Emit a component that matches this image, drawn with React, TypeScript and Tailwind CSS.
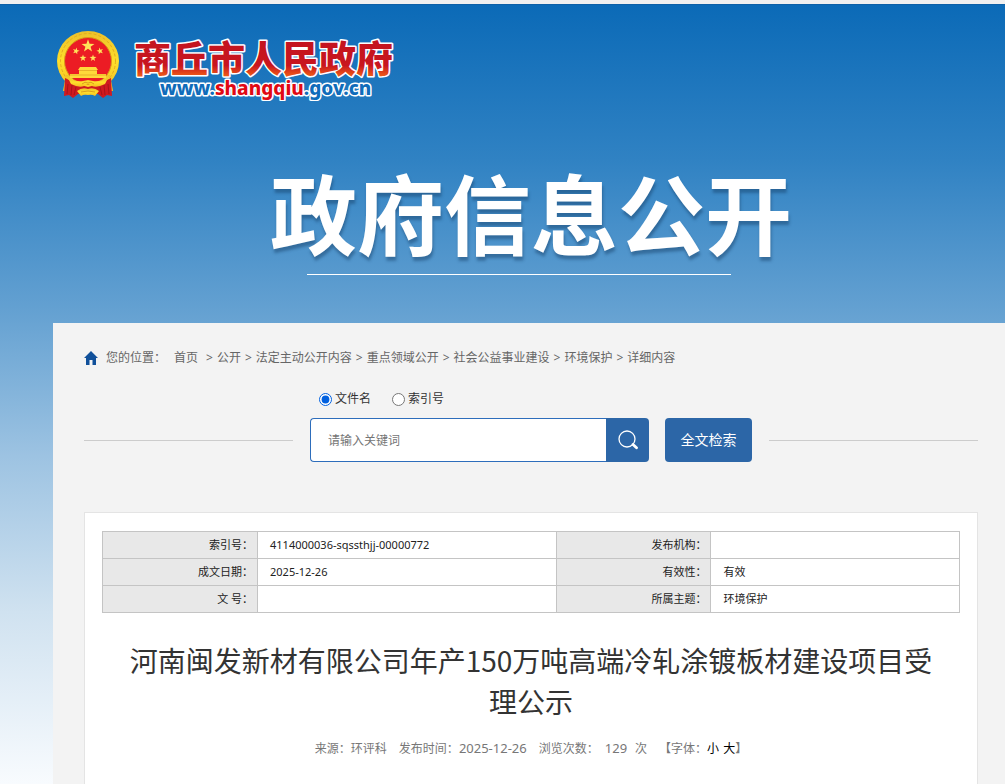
import { Fragment } from 'react'

const crumbs = ['公开', '法定主动公开内容', '重点领域公开', '社会公益事业建设', '环境保护', '详细内容']

const infoRows = [
  ['索引号：', '4114000036-sqssthjj-00000772', '发布机构：', ''],
  ['成文日期：', '2025-12-26', '有效性：', '有效'],
  ['文 号：', '', '所属主题：', '环境保护'],
]

const STAR = 'M0-10 2.3-3.2 9.5-3.1 3.8 1.2 5.9 8.1 0 4-5.9 8.1-3.8 1.2-9.5-3.1-2.3-3.2Z'

function Emblem() {
  return (
    <svg aria-hidden="true" className="shrink-0" height="68" viewBox="0 0 62 68" width="62">
      <defs>
        <linearGradient id="gold" x1="0" x2="0" y1="0" y2="1">
          <stop offset="0" stopColor="#ecc02a" />
          <stop offset="0.5" stopColor="#ffdf2b" />
          <stop offset="1" stopColor="#f5bd22" />
        </linearGradient>
      </defs>
      <ellipse cx="31" cy="30" fill="url(#gold)" rx="31" ry="30" />
      <path d="M9 44 6 60h14l11-4 11 4h14l-3-16Z" fill="url(#gold)" />
      <circle cx="31" cy="30" fill="none" r="27.5" stroke="#e3ab1f" strokeDasharray="3 2" strokeWidth="1" />
      <circle cx="31" cy="30" fill="#ec1c24" r="23.5" stroke="#d9961b" />
      <g fill="#ffe45a">
        <path d={STAR} transform="translate(31 15) scale(.68)" />
        <path d={STAR} transform="translate(19 20) rotate(15) scale(.36)" />
        <path d={STAR} transform="translate(43 20) rotate(-15) scale(.36)" />
        <path d={STAR} transform="translate(26 27) scale(.36)" />
        <path d={STAR} transform="translate(36 27) scale(.36)" />
      </g>
      <path d="M23 36h16l2 3h-1v4h9v4H13v-4h9v-4h-1Z" fill="#ffd93a" />
      <path d="M22 39.5h18M13 44h36" stroke="#e0a024" strokeWidth=".7" />
      {/* Ribbon */}
      <path d="M8 47 20 53l11 3 11-3 12-6 1 18-5-1-4 3-5-4H21l-5 4-4-3-5 1Z" fill="#cf1a20" />
      <path d="M11 47q9 4 15 3l5-1 5 1q6 1 15-3l-3 6q-8 4-13 2l-4-2-4 2q-5 2-13-2Z" fill="url(#gold)" />
      <path d="M20 60q5-4 11-2 6-2 11 2l-4 5q-3-2-7-1-4-1-7 1Z" fill="url(#gold)" />
      <path d="m11 53-1 10m5-9-1 10m5-8-2 8m34-11 1 10m-5-9 1 10m-5-8 2 8" stroke="#9e1118" strokeWidth=".8" />
      <path d="M25 53q3-3 6-1 3-2 6 1M24 61q7-2 14 0" fill="none" stroke="#d38f1b" strokeWidth=".8" />
    </svg>
  )
}

function SiteName() {
  return (
    <svg className="shrink-0" height="70" viewBox="0 0 266 70" width="266">
      <defs>
        <linearGradient gradientUnits="userSpaceOnUse" id="nameRed" x1="0" x2="0" y1="10" y2="45">
          <stop offset="0" stopColor="#c4141f" />
          <stop offset="0.7" stopColor="#c8161f" />
          <stop offset="1" stopColor="#ee5a17" />
        </linearGradient>
      </defs>
      <g paintOrder="stroke" stroke="#fff" strokeLinejoin="round" strokeWidth="3">
        <text
          className="font-['Noto_Sans_CJK_SC',sans-serif] text-[37px] font-black"
          fill="url(#nameRed)"
          x="1"
          y="42"
        >
          商丘市人民政府
        </text>
        <text className="font-['Noto_Sans',sans-serif] text-[19px] font-extrabold" fill="#0f6cba" x="27" y="64">
          www.<tspan fill="#e00914">shangqiu</tspan>.gov.cn
        </text>
      </g>
    </svg>
  )
}

function Breadcrumb() {
  return (
    <nav className="flex items-center text-xs leading-4 text-[#666]">
      <svg aria-hidden="true" className="mr-2" height="14" viewBox="0 0 14 14" width="14">
        <path d="M7 0 0 7h2v7h3.5V9h3v5H12V7h2Z" fill="#10509a" />
      </svg>
      <span>您的位置：</span>
      <a className="mr-1 ml-2" href="#">
        首页
      </a>
      {crumbs.map((crumb) => (
        <Fragment key={crumb}>
          <span className="px-1">&gt;</span>
          <a href="#">{crumb}</a>
        </Fragment>
      ))}
    </nav>
  )
}

function SearchArea() {
  return (
    <div className="mt-6 flex items-end gap-[17px]">
      <div className="mb-[21px] h-px flex-1 bg-[#ccc]" />
      <form className="flex flex-col gap-[11px]" onSubmit={(e) => e.preventDefault()}>
        <div className="flex gap-[21px] pt-px pl-[9px] text-xs leading-4 text-[#333]">
          <label className="flex items-center gap-[3px]">
            <input className="size-[13px] accent-[#0060df]" defaultChecked name="field" type="radio" />
            文件名
          </label>
          <label className="flex items-center gap-[3px]">
            <input className="size-[13px] accent-[#0060df]" name="field" type="radio" />
            索引号
          </label>
        </div>
        <div className="flex h-11 gap-4">
          <div className="flex">
            <input
              aria-label="请输入关键词"
              className="w-[296px] rounded-l border border-r-0 border-[#2d6dbb] bg-white pt-0.5 pl-[17px] text-xs outline-none placeholder:text-[#757575]"
              placeholder="请输入关键词"
              type="text"
            />
            <button
              aria-label="搜索"
              className="flex w-[43px] items-center justify-center rounded-r bg-[#2c66a7]"
              type="submit"
            >
              <svg fill="none" height="20" stroke="#fff" viewBox="0 0 20 20" width="20">
                <circle cx="9" cy="9" r="8" strokeWidth="1.3" />
                <path d="m15 14.5 3.5 3.3" strokeLinecap="round" strokeWidth="2.8" />
              </svg>
            </button>
          </div>
          <button className="w-[87px] rounded bg-[#2c66a7] text-sm text-white" type="button">
            全文检索
          </button>
        </div>
      </form>
      <div className="mb-[21px] h-px flex-1 bg-[#ccc]" />
    </div>
  )
}

function InfoTable() {
  return (
    <table className="w-full table-fixed border-collapse text-[11px] leading-4 text-[#222]">
      <colgroup>
        <col className="w-[155px]" />
        <col />
        <col className="w-[154px]" />
        <col className="w-[29%]" />
      </colgroup>
      <tbody>
        {infoRows.map(([label, value, label2, value2]) => (
          <tr className="h-[27px]" key={label}>
            <th className="border border-[#c4c4c4] bg-[#e8e8e8] pr-1 text-right font-normal" scope="row">
              {label}
            </th>
            <td className="border border-[#c4c4c4] pl-3">{value}</td>
            <th className="border border-[#c4c4c4] bg-[#e8e8e8] pr-1 text-right font-normal" scope="row">
              {label2}
            </th>
            <td className="border border-[#c4c4c4] pl-3">{value2}</td>
          </tr>
        ))}
      </tbody>
    </table>
  )
}

export default function App() {
  return (
    <div className="flex min-h-screen flex-col border-t-4 border-[#f0f0f0] bg-[linear-gradient(180deg,#0b6ab7_0%,#3082c3_20%,#66a2d2_40%,#9dc3e2_58%,#d0e2f0_78%,#f8fbfe_100%)] font-['Noto_Sans','Noto_Sans_CJK_SC',sans-serif]">
      {/* Banner */}
      <header className="h-[319px] border-t border-[#0d60a8] pl-[57px]">
        <a className="flex gap-[14px] pt-[26px]" href="#">
          <Emblem />
          <SiteName />
        </a>
        <div className="mt-[66px] flex flex-col items-center">
          <h1 className="text-[87px] leading-[96px] font-bold whitespace-nowrap text-white [text-shadow:1px_4px_3px_rgba(20,60,100,0.45)]">
            政府信息公开
          </h1>
          <div className="mt-[11px] mr-6 h-px w-[424px] bg-white" />
        </div>
      </header>

      {/* Content panel */}
      <main className="ml-[53px] flex flex-1 flex-col bg-[#f3f3f3] pt-[27px] pr-[27px] pl-[31px]">
        <Breadcrumb />
        <SearchArea />

        <article className="mt-[50px] flex-1 border border-b-0 border-[#e4e4e4] bg-white px-[17px] pt-[18px]">
          <InfoTable />
          <h2 className="mt-[27px] px-5 text-center font-['Noto_Sans_CJK_SC',sans-serif] text-[28px] leading-[41px] text-[#333]">
            河南闽发新材有限公司年产150万吨高端冷轧涂镀板材建设项目受理公示
          </h2>
          <div className="mt-[18px] flex items-baseline justify-center gap-3 text-xs leading-4 text-[#777]">
            <span>来源：环评科</span>
            <span>
              发布时间：<span className="text-[13px]">2025-12-26</span>
            </span>
            <span>
              浏览次数：<span className="mr-2 ml-1.5 text-[13px]">129</span>次
            </span>
            <span className="flex">
              【字体：
              <button className="mr-1 text-black" type="button">
                小
              </button>
              <button className="text-black" type="button">
                大
              </button>
              】
            </span>
          </div>
        </article>
      </main>
    </div>
  )
}
